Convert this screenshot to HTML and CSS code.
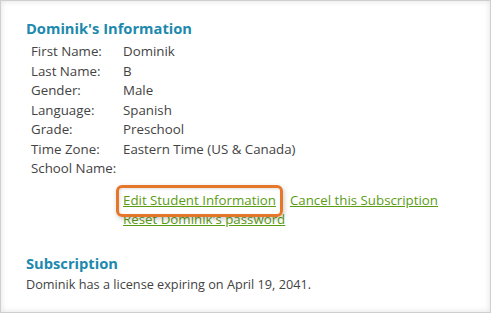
FILE: index.html
```
<!DOCTYPE html>
<html>
<head>
    <title>Student Information</title>
    <link rel="stylesheet" href="styles.css">
</head>
<body>
    <div class="panel">
        <h2 class="section-title">Dominik's Information</h2>
        <div class="info-list">
            <div class="info-label">First Name:</div><div class="info-value">Dominik</div>
            <div class="info-label">Last Name:</div><div class="info-value">B</div>
            <div class="info-label">Gender:</div><div class="info-value">Male</div>
            <div class="info-label">Language:</div><div class="info-value">Spanish</div>
            <div class="info-label">Grade:</div><div class="info-value">Preschool</div>
            <div class="info-label">Time Zone:</div><div class="info-value">Eastern Time (US &amp; Canada)</div>
            <div class="info-label">School Name:</div><div class="info-value"></div>
        </div>
        <div class="actions">
            <div class="action-row">
                <a class="highlight">Edit Student Information</a>
                <a>Cancel this Subscription</a>
            </div>
            <div class="action-row">
                <a>Reset Dominik's password</a>
            </div>
        </div>

        <h2 class="section-title sub-title">Subscription</h2>
        <p class="note">Dominik has a license expiring on April 19, 2041.</p>
    </div>
</body>
</html>
```
FILE: styles.css
```
body {
    margin: 0;
    font-family: "Open Sans", "DejaVu Sans", sans-serif;
    font-size: 13.3px;
    color: #434343;
}

.panel {
    height: 313px;
    box-sizing: border-box;
    border: 1px solid #cfcfcf;
    box-shadow: inset 0 0 6px rgba(0, 0, 0, 0.12);
    padding: 17px 20px 0 25px;
}

.section-title {
    margin: 0;
    font-size: 14.7px;
    font-weight: bold;
    color: #1d89ad;
    line-height: 20px;
}

.info-list {
    display: grid;
    grid-template-columns: 92px auto;
    padding-left: 5px;
    margin-top: 4px;
    line-height: 19.5px;
}

.actions {
    padding-left: 97px;
    margin-top: 12px;
    line-height: 19px;
}

.action-row {
    display: flex;
    gap: 14px;
}

a {
    color: #5b9c15;
    text-decoration: underline;
    cursor: pointer;
}

a.highlight {
    position: relative;
}

a.highlight::after {
    content: "";
    position: absolute;
    top: -6px;
    bottom: -7px;
    left: -7px;
    right: -7px;
    border: 3px solid #e5772b;
    border-radius: 6px;
    box-shadow: 1px 2px 5px rgba(0, 0, 0, 0.22), inset 1px 1px 3px rgba(0, 0, 0, 0.12);
}

.sub-title {
    margin-top: 24px;
}

.note {
    margin: 2px 0 0;
    font-size: 12.7px;
    line-height: 19px;
}
```
